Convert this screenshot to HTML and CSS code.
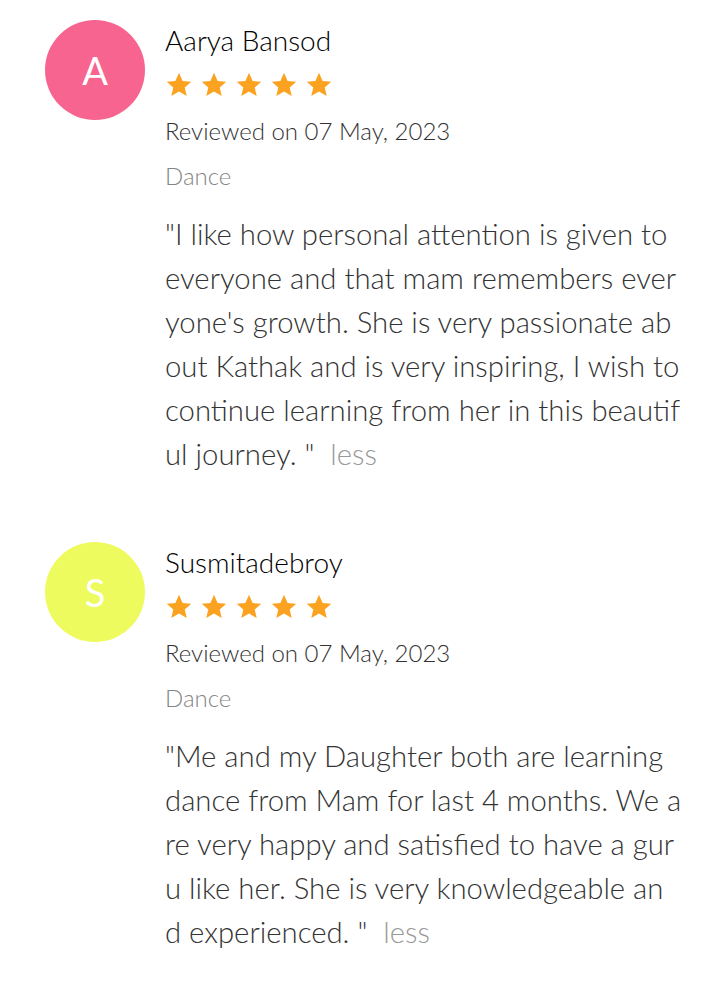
FILE: index.html
```html
<!DOCTYPE html>
<html lang="en">
<head>
<meta charset="utf-8">
<link rel="stylesheet" href="styles.css">
</head>
<body>
<div class="list">
  <div class="review">
    <div class="avatar avatar-pink">A</div>
    <div class="body">
      <div class="name">Aarya Bansod</div>
      <div class="stars">
        <svg class="star" viewBox="0 0 24 24"><path d="M12 1.5l3.1 7.1 7.4.6-5.6 4.9 1.7 7.4L12 17.6l-6.6 3.9 1.7-7.4-5.6-4.9 7.4-.6z"/></svg>
        <svg class="star" viewBox="0 0 24 24"><path d="M12 1.5l3.1 7.1 7.4.6-5.6 4.9 1.7 7.4L12 17.6l-6.6 3.9 1.7-7.4-5.6-4.9 7.4-.6z"/></svg>
        <svg class="star" viewBox="0 0 24 24"><path d="M12 1.5l3.1 7.1 7.4.6-5.6 4.9 1.7 7.4L12 17.6l-6.6 3.9 1.7-7.4-5.6-4.9 7.4-.6z"/></svg>
        <svg class="star" viewBox="0 0 24 24"><path d="M12 1.5l3.1 7.1 7.4.6-5.6 4.9 1.7 7.4L12 17.6l-6.6 3.9 1.7-7.4-5.6-4.9 7.4-.6z"/></svg>
        <svg class="star" viewBox="0 0 24 24"><path d="M12 1.5l3.1 7.1 7.4.6-5.6 4.9 1.7 7.4L12 17.6l-6.6 3.9 1.7-7.4-5.6-4.9 7.4-.6z"/></svg>
      </div>
      <div class="date">Reviewed on 07 May, 2023</div>
      <div class="category">Dance</div>
      <p class="text"><span class="line">"I like how personal attention is given to</span><span class="line">everyone and that mam remembers ever</span><span class="line">yone's growth. She is very passionate ab</span><span class="line">out Kathak and is very inspiring, I wish to</span><span class="line">continue learning from her in this beautif</span><span class="line">ul journey. " <span class="less">less</span></span></p>
    </div>
  </div>
  <div class="review">
    <div class="avatar avatar-yellow">S</div>
    <div class="body">
      <div class="name">Susmitadebroy</div>
      <div class="stars">
        <svg class="star" viewBox="0 0 24 24"><path d="M12 1.5l3.1 7.1 7.4.6-5.6 4.9 1.7 7.4L12 17.6l-6.6 3.9 1.7-7.4-5.6-4.9 7.4-.6z"/></svg>
        <svg class="star" viewBox="0 0 24 24"><path d="M12 1.5l3.1 7.1 7.4.6-5.6 4.9 1.7 7.4L12 17.6l-6.6 3.9 1.7-7.4-5.6-4.9 7.4-.6z"/></svg>
        <svg class="star" viewBox="0 0 24 24"><path d="M12 1.5l3.1 7.1 7.4.6-5.6 4.9 1.7 7.4L12 17.6l-6.6 3.9 1.7-7.4-5.6-4.9 7.4-.6z"/></svg>
        <svg class="star" viewBox="0 0 24 24"><path d="M12 1.5l3.1 7.1 7.4.6-5.6 4.9 1.7 7.4L12 17.6l-6.6 3.9 1.7-7.4-5.6-4.9 7.4-.6z"/></svg>
        <svg class="star" viewBox="0 0 24 24"><path d="M12 1.5l3.1 7.1 7.4.6-5.6 4.9 1.7 7.4L12 17.6l-6.6 3.9 1.7-7.4-5.6-4.9 7.4-.6z"/></svg>
      </div>
      <div class="date">Reviewed on 07 May, 2023</div>
      <div class="category">Dance</div>
      <p class="text"><span class="line">"Me and my Daughter both are learning</span><span class="line">dance from Mam for last 4 months. We a</span><span class="line">re very happy and satisfied to have a gur</span><span class="line">u like her. She is very knowledgeable an</span><span class="line">d experienced. " <span class="less">less</span></span></p>
    </div>
  </div>
</div>
</body>
</html>
```
FILE: styles.css
```css
* { box-sizing: border-box; }
html, body { margin: 0; padding: 0; background: #fff; }
body { font-family: Lato, "Noto Sans", sans-serif; color: #333; }
.list { display: flex; flex-direction: column; gap: 66px; padding-top: 20px; }
.review { display: flex; gap: 20px; padding-left: 45px; }
.avatar {
  width: 100px; height: 100px; border-radius: 50%;
  flex: none; display: flex; align-items: center; justify-content: center;
  color: #fff; font-size: 38px; font-weight: 400;
}
.avatar-pink { background: #f7648f; }
.avatar-yellow { background: #eefb5e; }
.body { display: flex; flex-direction: column; }
.name { font-size: 28px; line-height: 32px; color: #000; margin-top: 4px; font-weight: 300; }
.stars { display: flex; gap: 7px; margin-top: 15px; }
.star { width: 28px; height: 28px; fill: #fba321; }
.date { font-size: 24px; line-height: 28px; color: #333; margin-top: 18px; font-weight: 300; }
.category { font-size: 24px; line-height: 28px; color: #858585; margin-top: 17px; font-weight: 300; }
.text { margin: 22px 0 0; font-size: 29.3px; line-height: 44px; font-weight: 300; color: #333; }
.line { display: block; white-space: nowrap; }
.less { color: #999; margin-left: 8px; }
```
